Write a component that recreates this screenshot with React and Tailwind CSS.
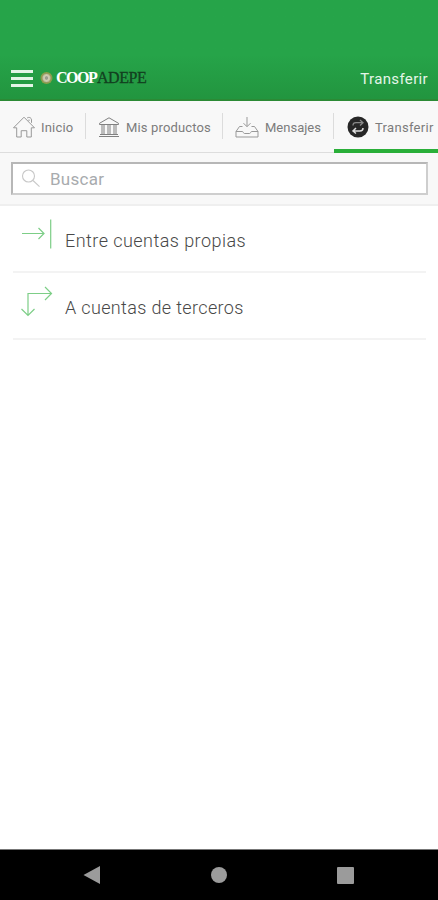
import React from "react";

const HomeIcon = () => (
  <svg className="h-[24px] w-[24px] shrink-0" viewBox="0 0 24 24" fill="none" stroke="#999" strokeWidth="1" strokeLinejoin="round">
    <path d="M1.500 12.800 12 2.200l10.500 10.600h-3.200V22h-4.500v-6.300H9.200V22H4.700v-9.200z" />
    <path d="M15 3.200c1.500-1.500 4.500-.8 4.500 1.800v2.800M17 4.500v1.500" />
  </svg>
);

const BankIcon = () => (
  <svg className="h-[22px] w-[22px] shrink-0" viewBox="0 0 22 22" fill="none" stroke="#808080" strokeWidth="1">
    <path d="M1.500 7.300 11 1.800l9.500 5.500v1.200h-19zM2 18.500h18M1 20.500h20" />
    <path d="M4 9v9.500M6 9v9.500M10 9v9.500M12 9v9.500M16 9v9.500M18 9v9.500" />
  </svg>
);

const InboxIcon = () => (
  <svg className="h-[24px] w-[24px] shrink-0" viewBox="0 0 24 24" fill="none" stroke="#999" strokeWidth="1" strokeLinejoin="round">
    <path d="M12 2v9.500M8.500 8.200l3.500 3.500 3.500-3.500" />
    <path d="M7.500 11.500H4.500L1 16.500V22h22v-5.500l-3.500-5H16.500M1 16.500h6.500c.8 0 .8 2 2 2h5c1.200 0 1.200-2 2-2H23" />
  </svg>
);

const TransferIcon = () => (
  <svg className="h-[22px] w-[22px] shrink-0" viewBox="0 0 22 22" fill="none">
    <circle cx="11" cy="11" r="10.500" fill="#272727" />
    <path d="M6 9.500c0-2 1-2.800 3-2.800h7M13 4l3 2.700-3 2.700" stroke="#8a8a8a" strokeWidth="1.300" />
    <path d="M16 12c0 2-1 3-3 3H6M9 12l-3 3 3 2.500" stroke="#dedede" strokeWidth="1.500" />
  </svg>
);

const SearchIcon = () => (
  <svg className="h-[20px] w-[20px] shrink-0" viewBox="0 0 20 20" fill="none" stroke="#c8c8c8" strokeWidth="1.100">
    <circle cx="7.500" cy="7" r="6" />
    <path d="m12 11.500 6.500 6.200" />
  </svg>
);

const OwnAccountsIcon = () => (
  <svg className="h-[32px] w-[32px] shrink-0" viewBox="0 0 32 32" fill="none" stroke="#7dce87" strokeWidth="1.200">
    <path d="M1 15.500h22M17.500 10l5.500 5.500-5.500 5.500M29.700 1.500v29" />
  </svg>
);

const ThirdPartyIcon = () => (
  <svg className="h-[32px] w-[32px] shrink-0" viewBox="0 0 32 32" fill="none" stroke="#7dce87" strokeWidth="1.200">
    <path d="M7 30V8.500h23M24 2l6.500 6.500-6.500 6.500M.5 24 7 30.500l6.500-6.500" />
  </svg>
);

const Emblem = () => (
  <svg className="h-[14px] w-[14px] shrink-0" viewBox="0 0 14 14" fill="none">
    <circle cx="6.500" cy="7" r="6" fill="#8b9f48" />
    <circle cx="6.500" cy="7" r="4.500" fill="#c4c4a4" stroke="#8a8f55" strokeWidth=".8" />
    <circle cx="6.500" cy="7" r="2.300" fill="#9a9d8c" stroke="#e2ddc4" strokeWidth=".7" />
  </svg>
);

const Divider = () => <span className="mt-[12px] h-[26px] w-px shrink-0 bg-[#dcdcdc]" />;

export default function App() {
  return (
    <div className="flex h-[900px] w-[438px] flex-col overflow-hidden bg-white font-['Roboto',sans-serif]">
      <header className="flex h-[101px] shrink-0 items-end border-b-2 border-[#2b8a35] bg-linear-to-b from-[#26a449] from-55% to-[#22953f]">
        <div className="flex h-[42px] w-full items-center pr-[10px] pl-[11px]">
          <div className="flex h-[17px] w-[22px] flex-col justify-between">
            <span className="h-[3px] bg-[#e3f5e7]" />
            <span className="h-[3px] bg-[#e3f5e7]" />
            <span className="h-[3px] bg-[#e3f5e7]" />
          </div>
          <div className="ml-[7px] flex items-center">
            <Emblem />
            <div className="ml-[2px] flex font-['Liberation_Serif',serif] text-[16px] leading-[18px] whitespace-nowrap">
              <span className="w-[41px] font-bold tracking-[-1.500px] text-white">COOP</span>
              <span className="tracking-[-0.450px] text-[#12401f] [-webkit-text-stroke:0.300px_#12401f]">ADEPE</span>
            </div>
          </div>
          <span className="mt-[2px] ml-auto text-[15px] tracking-[0.350px] text-[#e4f5e8]">Transferir</span>
        </div>
      </header>

      <nav className="flex h-[52px] shrink-0 border-b border-[#dddddd] bg-[#f8f8f8] text-[13px] whitespace-nowrap text-[#7c7c7c]">
        <div className="flex w-[85px] shrink-0 items-center pl-[12px]">
          <HomeIcon />
          <span className="mt-[2px] ml-[5px] tracking-[0.200px]">Inicio</span>
        </div>
        <Divider />
        <div className="flex w-[136px] shrink-0 items-center pl-[12px]">
          <BankIcon />
          <span className="mt-[2px] ml-[6px] tracking-[0.150px]">Mis productos</span>
        </div>
        <Divider />
        <div className="flex w-[110px] shrink-0 items-center pl-[12px]">
          <InboxIcon />
          <span className="mt-[2px] ml-[6px]">Mensajes</span>
        </div>
        <Divider />
        <div className="-mb-px flex w-[104px] shrink-0 items-center border-b-[4px] border-[#2aaf39] pt-[3px] pl-[13px]">
          <TransferIcon />
          <span className="mt-[2px] ml-[6px] tracking-[0.300px]">Transferir</span>
        </div>
      </nav>

      <div className="flex h-[53px] shrink-0 items-start border-b-2 border-[#efefef] bg-[#f8f8f8] pt-[9px] pr-[10px] pl-[11px]">
        <div className="flex h-[33px] w-full items-center border-2 border-t-[#b7b7b7] border-r-[#cecece] border-b-[#cecece] border-l-[#b7b7b7] bg-white pl-[8px]">
          <SearchIcon />
          <span className="mt-[2px] ml-[9px] text-[17px] tracking-[0.250px] text-[#a8abae]">Buscar</span>
        </div>
      </div>

      <main className="min-h-0 flex-1 pr-[12px] pl-[13px] text-[18px] whitespace-nowrap text-[#484848]">
        <div className="flex h-[67px] items-start border-b-2 border-[#f3f3f3] pt-[12px] pl-[8px]">
          <OwnAccountsIcon />
          <span className="mt-[9px] ml-[12px] font-light tracking-[0.450px]">Entre cuentas propias</span>
        </div>
        <div className="flex h-[67px] items-start border-b-2 border-[#f3f3f3] pt-[12px] pl-[8px]">
          <ThirdPartyIcon />
          <span className="mt-[9px] ml-[12px] font-light tracking-[0.350px]">A cuentas de terceros</span>
        </div>
      </main>

      <footer className="flex h-[51px] shrink-0 items-center justify-between border-t border-[#777777] bg-black pr-[84px] pl-[83px]">
        <svg className="h-[20px] w-[17px]" viewBox="0 0 17 20"><path d="M0.500 10 17 1v18z" fill="#9b9b9b" /></svg>
        <span className="h-[16px] w-[16px] rounded-full bg-[#9b9b9b]" />
        <span className="h-[17px] w-[17px] rounded-[1px] bg-[#9b9b9b]" />
      </footer>
    </div>
  );
}
